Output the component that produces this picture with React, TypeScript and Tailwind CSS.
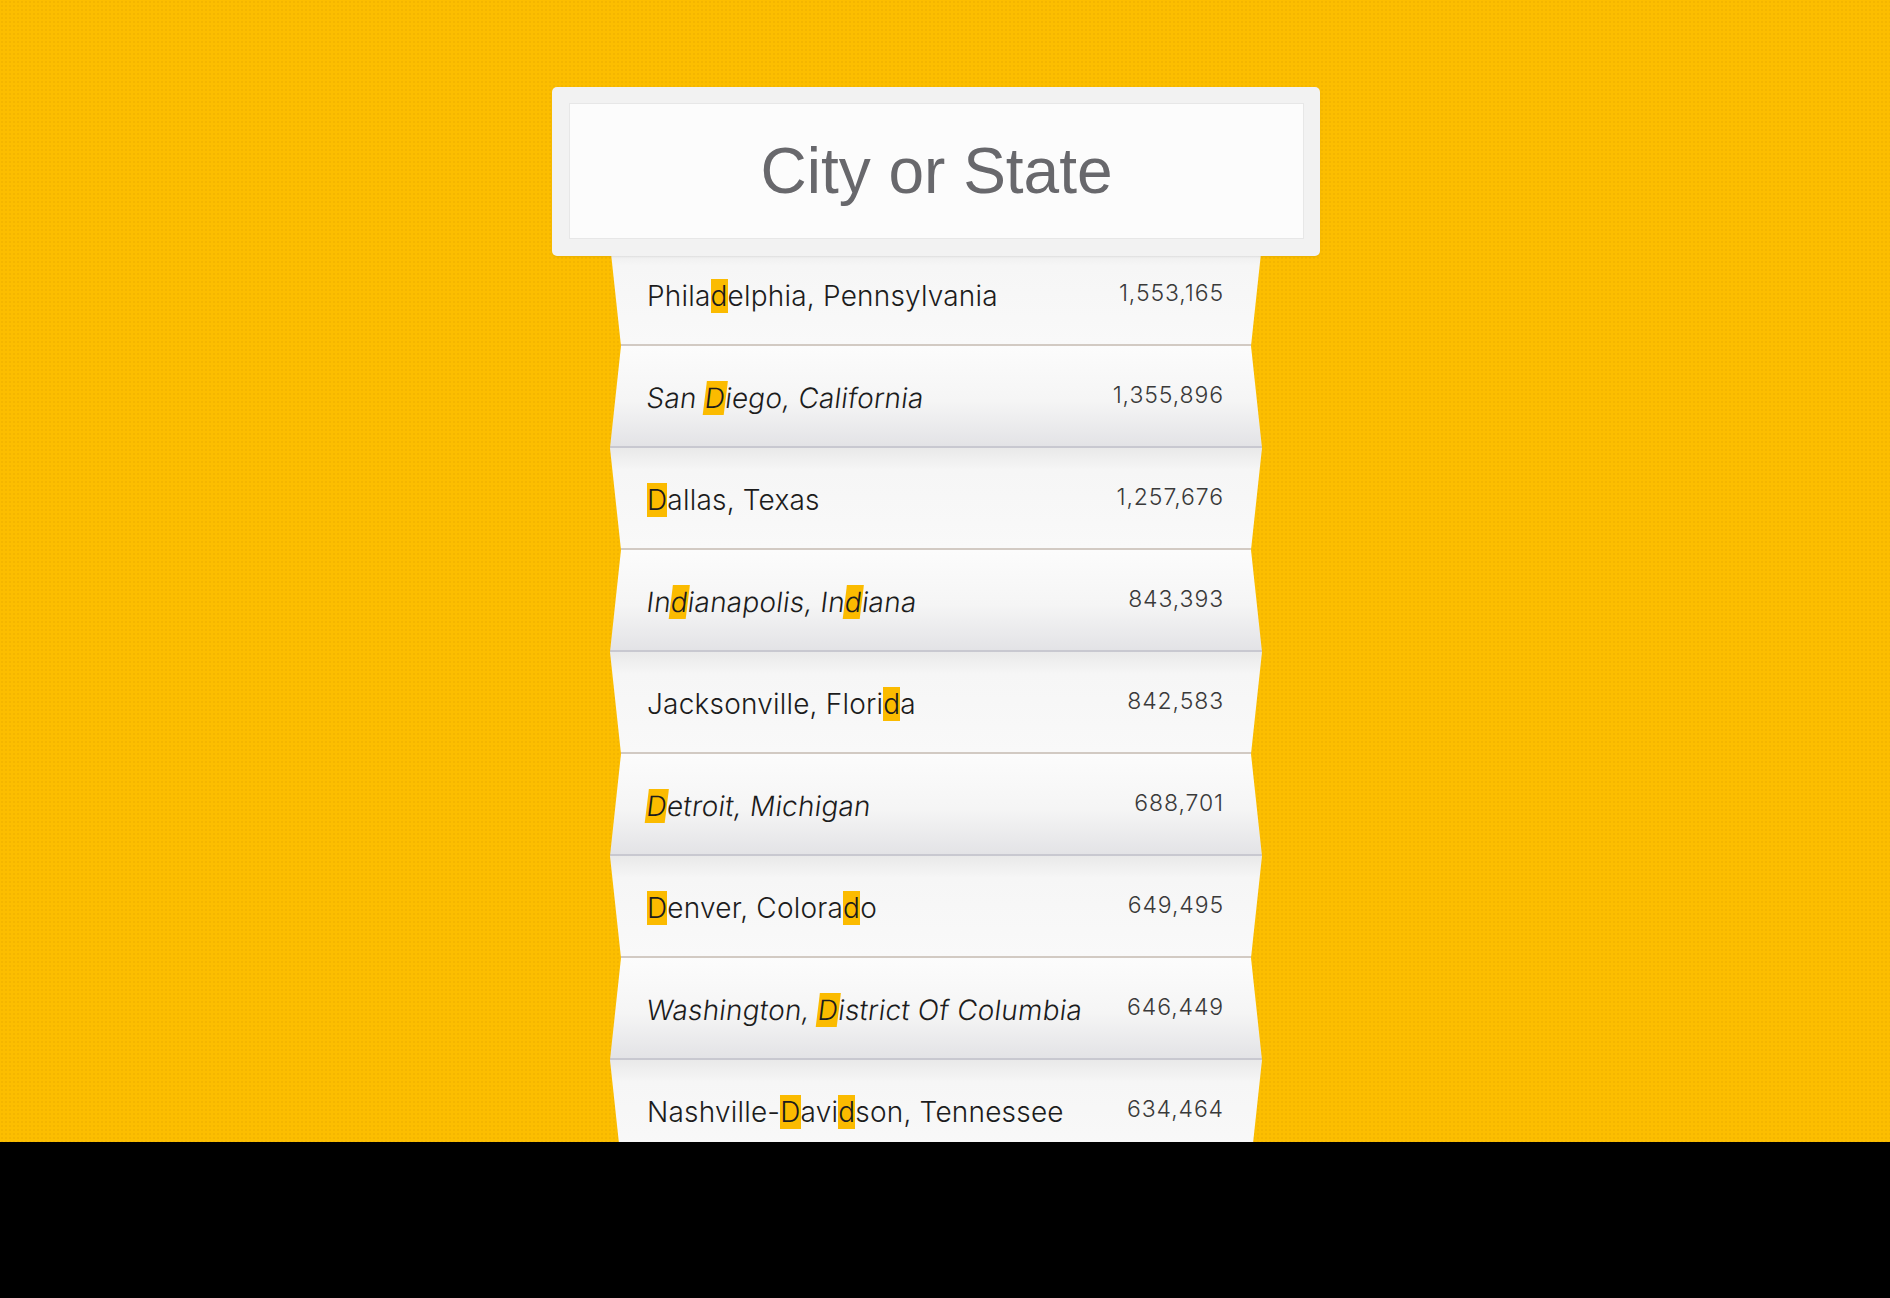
import React from 'react';

const cities: [string, string][] = [
    ['Phila[d]elphia, Pennsylvania', '1,553,165'],
    ['San [D]iego, California', '1,355,896'],
    ['[D]allas, Texas', '1,257,676'],
    ['In[d]ianapolis, In[d]iana', '843,393'],
    ['Jacksonville, Flori[d]a', '842,583'],
    ['[D]etroit, Michigan', '688,701'],
    ['[D]enver, Colora[d]o', '649,495'],
    ['Washington, [D]istrict Of Columbia', '646,449'],
    ['Nashville-[D]avi[d]son, Tennessee', '634,464'],
];

// "[x]" marks the matched letters
function Highlighted({ text }: { text: string }) {
    const parts = text.split(/\[|\]/);
    return (
        <>
            {parts.map((part, i) =>
                i % 2 === 1 ? (
                    <span key={i} className="bg-[#fbbb00]">
                        {part}
                    </span>
                ) : (
                    <span key={i}>{part}</span>
                ),
            )}
        </>
    );
}

function Row({ name, population, index }: { name: string; population: string; index: number }) {
    const foldedIn = index % 2 === 0;

    return (
        <li
            className={
                foldedIn
                    ? 'flex h-[102px] items-center justify-between border-b-2 border-[#d2cac3] bg-[linear-gradient(180deg,#e9e9e9_0%,#f6f6f6_22%,#f9f9f9_100%)] pr-[38px] pl-[37px] [clip-path:polygon(0_0,100%_0,calc(100%_-_11px)_100%,11px_100%)]'
                    : 'flex h-[102px] items-center justify-between border-b-2 border-[#c8c8d0] bg-[linear-gradient(180deg,#fcfcfc_0%,#f5f5f5_55%,#e3e3e6_100%)] pr-[38px] pl-[37px] [clip-path:polygon(11px_0,calc(100%_-_11px)_0,100%_100%,0_100%)]'
            }
        >
            <span
                className={
                    foldedIn
                        ? "pt-[3px] font-['Inter',sans-serif] text-[28px] leading-[32px] font-light tracking-[0.2px] text-[#1c1c1c]"
                        : "inline-block -skew-x-[7deg] pt-[3px] font-['Inter',sans-serif] text-[28px] leading-[32px] font-light tracking-[0.2px] text-[#1c1c1c]"
                }
            >
                <Highlighted text={name} />
            </span>
            <span className="pb-[2px] font-['Inter',sans-serif] text-[23px] leading-[24px] font-light tracking-[0.9px] text-[#3a3a3a]">{population}</span>
        </li>
    );
}

export default function App() {
    return (
        <div className="flex min-h-screen flex-col bg-black">
            <div className="h-[1142px] overflow-hidden bg-[#fcbe00] bg-[radial-gradient(#f4b600_1px,transparent_1.2px)] bg-[length:4px_4px] pr-[18px]">
                <div className="flex flex-col items-center pt-[87px]">
                    <div className="relative z-10 h-[169px] w-[768px] rounded-[5px] bg-[#f2f2f2] p-[16px] pb-[17px] pl-[17px] shadow-[0_1px_2px_rgba(0,0,0,0.08)]">
                        <div className="flex h-full items-center justify-center border border-[#e7e7e7] bg-[#fcfcfc]">
                            <span className="font-['Liberation_Sans',Arial,sans-serif] text-[64px] leading-none text-[#68686c]">City or State</span>
                        </div>
                    </div>

                    <ul className="-mt-[12px] w-[652px]">
                        {cities.map(([name, population], i) => (
                            <Row key={name} name={name} population={population} index={i} />
                        ))}
                    </ul>
                </div>
            </div>
            <div className="h-[156px] bg-black"></div>
        </div>
    );
}
